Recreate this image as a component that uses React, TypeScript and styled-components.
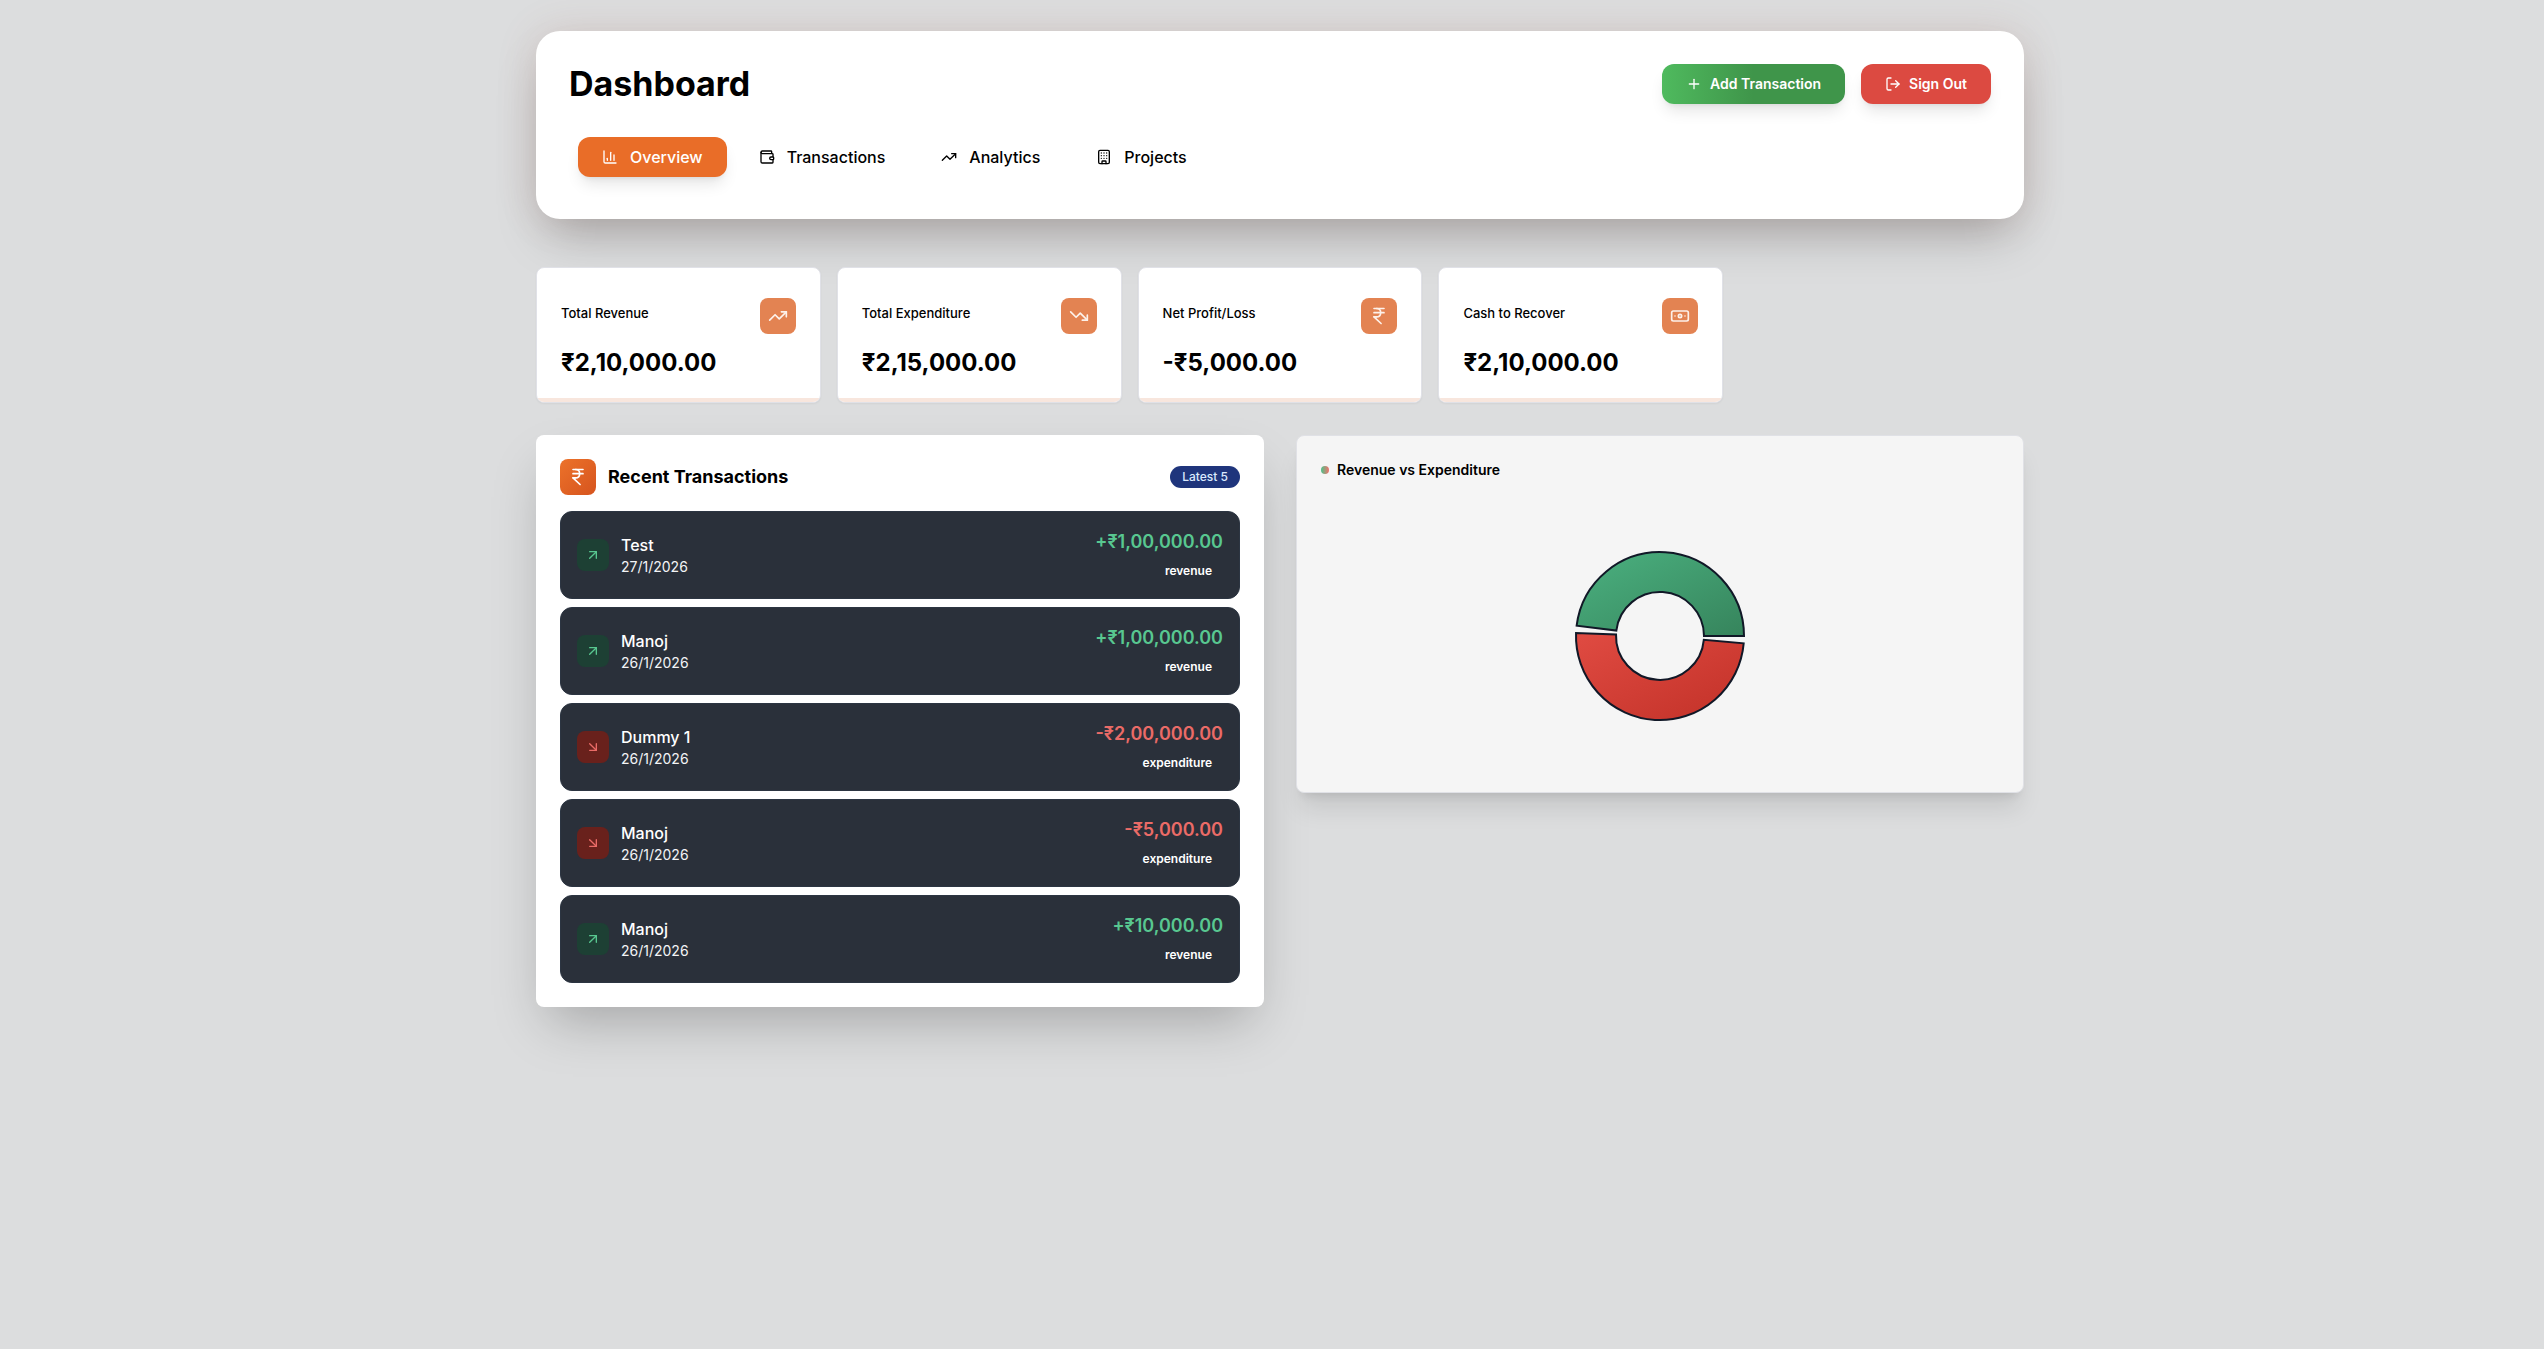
import React from 'react';
import styled, { createGlobalStyle } from 'styled-components';
import {
  ArrowDownRight,
  ArrowUpRight,
  Banknote,
  Building,
  ChartColumn,
  IndianRupee,
  LogOut,
  Plus,
  TrendingDown,
  TrendingUp,
  Wallet,
  type LucideIcon,
} from 'lucide-react';

const GlobalStyle = createGlobalStyle`
  *, *::before, *::after { box-sizing: border-box; }
  body {
    margin: 0;
    background: #dcddde;
    color: #000;
    font-family: Inter, "Noto Sans", sans-serif;
    font-size: 16px;
    line-height: 24px;
    -webkit-font-smoothing: antialiased;
  }
  h1, h2, h3, p, ul { margin: 0; padding: 0; }
  ul { list-style: none; }
  button { font: inherit; border: 0; cursor: pointer; }
`;

const Page = styled.div`
  min-height: 100vh;
  padding: 31px 24px 32px 40px;
`;

const Container = styled.main`
  max-width: 1488px;
  margin: 0 auto;
  display: flex;
  flex-direction: column;
  gap: 32px;
`;

const Header = styled.header`
  display: flex;
  flex-direction: column;
  gap: 24px;
  margin-bottom: 16px;
  padding: 33px;
  border-radius: 24px;
  background: #fff;
  box-shadow: 0 25px 50px -12px rgba(0, 0, 0, 0.25), 0 0 40px rgba(170, 90, 65, 0.15);
`;

const HeaderRow = styled.div`
  display: flex;
  align-items: center;
  justify-content: space-between;
`;

const Title = styled.h1`
  font-size: 34px;
  line-height: 40px;
  font-weight: 700;
`;

const Actions = styled.div`
  display: flex;
  gap: 16px;
`;

const ActionButton = styled.button<{ $background: string }>`
  display: flex;
  align-items: center;
  gap: 8px;
  height: 40px;
  padding: 0 24px;
  border-radius: 12px;
  background: ${(p) => p.$background};
  color: #fff;
  font-size: 14px;
  line-height: 20px;
  font-weight: 600;
  box-shadow: 0 10px 15px -3px rgba(0, 0, 0, 0.1), 0 4px 6px -4px rgba(0, 0, 0, 0.1);
`;

const Tabs = styled.nav`
  display: flex;
  gap: 8px;
  padding: 9px;
`;

const Tab = styled.button<{ $active?: boolean }>`
  display: flex;
  align-items: center;
  gap: 12px;
  height: 40px;
  padding: 0 24px;
  border-radius: 12px;
  font-weight: 500;
  color: ${(p) => (p.$active ? '#fff' : '#000')};
  background: ${(p) => (p.$active ? '#e96d28' : 'transparent')};
  box-shadow: ${(p) =>
    p.$active ? '0 10px 15px -3px rgba(0, 0, 0, 0.1), 0 4px 6px -4px rgba(0, 0, 0, 0.1)' : 'none'};
`;

const StatGrid = styled.section`
  display: grid;
  grid-template-columns: repeat(5, minmax(0, 1fr));
  gap: 16px;
`;

const StatCard = styled.article`
  display: flex;
  flex-direction: column;
  justify-content: space-between;
  height: 136px;
  border: 1px solid #e0e1e7;
  border-radius: 8px;
  background: #fff;
  overflow: hidden;
  box-shadow: 0 1px 2px rgba(0, 0, 0, 0.05);
`;

const StatBody = styled.div`
  display: flex;
  flex-direction: column;
  gap: 13px;
  padding: 30px 24px 0;
`;

const StatHead = styled.div`
  display: flex;
  align-items: center;
  justify-content: space-between;
`;

const StatLabel = styled.h2`
  margin-bottom: 6px;
  font-size: 13px;
  line-height: 20px;
  font-weight: 500;
`;

const StatValue = styled.p`
  font-size: 24px;
  line-height: 32px;
  font-weight: 700;
`;

const StatBar = styled.div`
  height: 4px;
  background: #f8e6dd;
`;

const IconTile = styled.span<{ $background: string; $color?: string; $size?: number }>`
  display: flex;
  align-items: center;
  justify-content: center;
  flex: none;
  width: ${(p) => p.$size ?? 36}px;
  height: ${(p) => p.$size ?? 36}px;
  border-radius: 8px;
  background: ${(p) => p.$background};
  color: ${(p) => p.$color ?? '#fff'};
`;

const PanelGrid = styled.div`
  display: grid;
  grid-template-columns: repeat(2, minmax(0, 1fr));
  gap: 32px;
  align-items: start;
`;

const TransactionsPanel = styled.section`
  display: flex;
  flex-direction: column;
  gap: 16px;
  padding: 24px;
  border-radius: 8px;
  background: #fff;
  box-shadow: 0 25px 50px -12px rgba(0, 0, 0, 0.25);
`;

const PanelTitle = styled.h2`
  display: flex;
  align-items: center;
  gap: 12px;
  font-size: 18px;
  line-height: 28px;
  font-weight: 700;
`;

const Pill = styled.span`
  padding: 3px 12px;
  border-radius: 11px;
  background: #1f357c;
  color: #dbeafe;
  font-size: 12px;
  line-height: 16px;
  font-weight: 500;
`;

const List = styled.ul`
  display: flex;
  flex-direction: column;
  gap: 8px;
`;

const Row = styled.li`
  display: flex;
  align-items: center;
  gap: 12px;
  height: 88px;
  padding: 0 16px;
  border: 1px solid #2c3542;
  border-radius: 12px;
  background: #2a303a;
  color: #fff;
`;

const RowText = styled.div`
  flex: 1;
`;

const RowName = styled.p`
  font-weight: 500;
`;

const RowDate = styled.p`
  font-size: 14px;
  line-height: 20px;
  color: #f3f4f6;
`;

const RowTotals = styled.div`
  display: flex;
  flex-direction: column;
  align-items: flex-end;
  gap: 4px;
`;

const Amount = styled.p<{ $income: boolean }>`
  font-size: 18px;
  line-height: 28px;
  font-weight: 600;
  color: ${(p) => (p.$income ? '#58c790' : '#ea6b67')};
`;

const Kind = styled.span`
  padding: 3px 11px;
  font-size: 12px;
  line-height: 16px;
  font-weight: 600;
`;

const ChartPanel = styled.section`
  display: flex;
  flex-direction: column;
  gap: 24px;
  padding: 24px;
  border: 1px solid #e0e1e6;
  border-radius: 8px;
  background: #f5f5f5;
  box-shadow: 0 20px 25px -5px rgba(0, 0, 0, 0.1), 0 8px 10px -6px rgba(0, 0, 0, 0.1);
`;

const ChartTitle = styled.h2`
  display: flex;
  align-items: center;
  gap: 8px;
  font-size: 14px;
  line-height: 20px;
  font-weight: 600;
`;

const Dot = styled.span`
  width: 8px;
  height: 8px;
  border-radius: 50%;
  background: linear-gradient(90deg, #4cc38a, #f2706c);
`;

const ChartArea = styled.div`
  display: flex;
  align-items: center;
  justify-content: center;
  height: 264px;
`;

const stats: { label: string; value: string; icon: LucideIcon }[] = [
  { label: 'Total Revenue', value: '₹2,10,000.00', icon: TrendingUp },
  { label: 'Total Expenditure', value: '₹2,15,000.00', icon: TrendingDown },
  { label: 'Net Profit/Loss', value: '-₹5,000.00', icon: IndianRupee },
  { label: 'Cash to Recover', value: '₹2,10,000.00', icon: Banknote },
];

const tabs: { label: string; icon: LucideIcon }[] = [
  { label: 'Overview', icon: ChartColumn },
  { label: 'Transactions', icon: Wallet },
  { label: 'Analytics', icon: TrendingUp },
  { label: 'Projects', icon: Building },
];

const transactions = [
  { name: 'Test', date: '27/1/2026', amount: '₹1,00,000.00', income: true },
  { name: 'Manoj', date: '26/1/2026', amount: '₹1,00,000.00', income: true },
  { name: 'Dummy 1', date: '26/1/2026', amount: '₹2,00,000.00', income: false },
  { name: 'Manoj', date: '26/1/2026', amount: '₹5,000.00', income: false },
  { name: 'Manoj', date: '26/1/2026', amount: '₹10,000.00', income: true },
];

const OUTER = 84;
const INNER = 44;
const PADDING_ANGLE = 5;

function slicePath(start: number, end: number) {
  const point = (r: number, deg: number) => {
    const a = (deg * Math.PI) / 180;
    return `${(r * Math.cos(a)).toFixed(2)} ${(-r * Math.sin(a)).toFixed(2)}`;
  };
  return [
    `M${point(OUTER, start)}`,
    `A${OUTER} ${OUTER} 0 0 0 ${point(OUTER, end)}`,
    `L${point(INNER, end)}`,
    `A${INNER} ${INNER} 0 0 1 ${point(INNER, start)}`,
    'Z',
  ].join(' ');
}

function Donut({ revenue, expenditure }: { revenue: number; expenditure: number }) {
  const available = 360 - PADDING_ANGLE * 2;
  const split = (available * revenue) / (revenue + expenditure);
  return (
    <svg width="176" height="176" viewBox="-88 -88 176 176" role="img" aria-label="Revenue vs Expenditure">
      <defs>
        <linearGradient id="revenue" x1="0" y1="0" x2="1" y2="1">
          <stop offset="0" stopColor="#4bb180" />
          <stop offset="1" stopColor="#36845c" />
        </linearGradient>
        <linearGradient id="expenditure" x1="0" y1="0" x2="1" y2="1">
          <stop offset="0" stopColor="#e04b42" />
          <stop offset="1" stopColor="#c23128" />
        </linearGradient>
      </defs>
      <g stroke="#111827" strokeWidth="2">
        <path d={slicePath(0, split)} fill="url(#revenue)" />
        <path d={slicePath(split + PADDING_ANGLE, 360 - PADDING_ANGLE)} fill="url(#expenditure)" />
      </g>
    </svg>
  );
}

export default function App() {
  return (
    <>
      <GlobalStyle />
      <Page>
        <Container>
          <Header>
            <HeaderRow>
              <Title>Dashboard</Title>
              <Actions>
                <ActionButton $background="linear-gradient(90deg, #4fba5e, #3f954a 50%)">
                  <Plus size={16} />
                  Add Transaction
                </ActionButton>
                <ActionButton $background="#dc4a41">
                  <LogOut size={16} />
                  Sign Out
                </ActionButton>
              </Actions>
            </HeaderRow>
            <Tabs>
              {tabs.map(({ label, icon: Icon }, i) => (
                <Tab key={label} $active={i === 0}>
                  <Icon size={16} />
                  {label}
                </Tab>
              ))}
            </Tabs>
          </Header>

          <StatGrid>
            {stats.map(({ label, value, icon: Icon }) => (
              <StatCard key={label}>
                <StatBody>
                  <StatHead>
                    <StatLabel>{label}</StatLabel>
                    <IconTile $background="#e38352" $color="#fdf1ea">
                      <Icon size={20} />
                    </IconTile>
                  </StatHead>
                  <StatValue>{value}</StatValue>
                </StatBody>
                <StatBar />
              </StatCard>
            ))}
          </StatGrid>

          <PanelGrid>
            <TransactionsPanel>
              <HeaderRow>
                <PanelTitle>
                  <IconTile $background="linear-gradient(135deg, #ec722a, #d6541e)">
                    <IndianRupee size={20} />
                  </IconTile>
                  Recent Transactions
                </PanelTitle>
                <Pill>Latest 5</Pill>
              </HeaderRow>
              <List>
                {transactions.map((t, i) => (
                  <Row key={i}>
                    <IconTile
                      $size={32}
                      $background={t.income ? '#1d4034' : '#69211c'}
                      $color={t.income ? '#58c790' : '#ea6b67'}
                    >
                      {t.income ? <ArrowUpRight size={16} /> : <ArrowDownRight size={16} />}
                    </IconTile>
                    <RowText>
                      <RowName>{t.name}</RowName>
                      <RowDate>{t.date}</RowDate>
                    </RowText>
                    <RowTotals>
                      <Amount $income={t.income}>
                        {t.income ? '+' : '-'}
                        {t.amount}
                      </Amount>
                      <Kind>{t.income ? 'revenue' : 'expenditure'}</Kind>
                    </RowTotals>
                  </Row>
                ))}
              </List>
            </TransactionsPanel>

            <ChartPanel>
              <ChartTitle>
                <Dot />
                Revenue vs Expenditure
              </ChartTitle>
              <ChartArea>
                <Donut revenue={210000} expenditure={215000} />
              </ChartArea>
            </ChartPanel>
          </PanelGrid>
        </Container>
      </Page>
    </>
  );
}
